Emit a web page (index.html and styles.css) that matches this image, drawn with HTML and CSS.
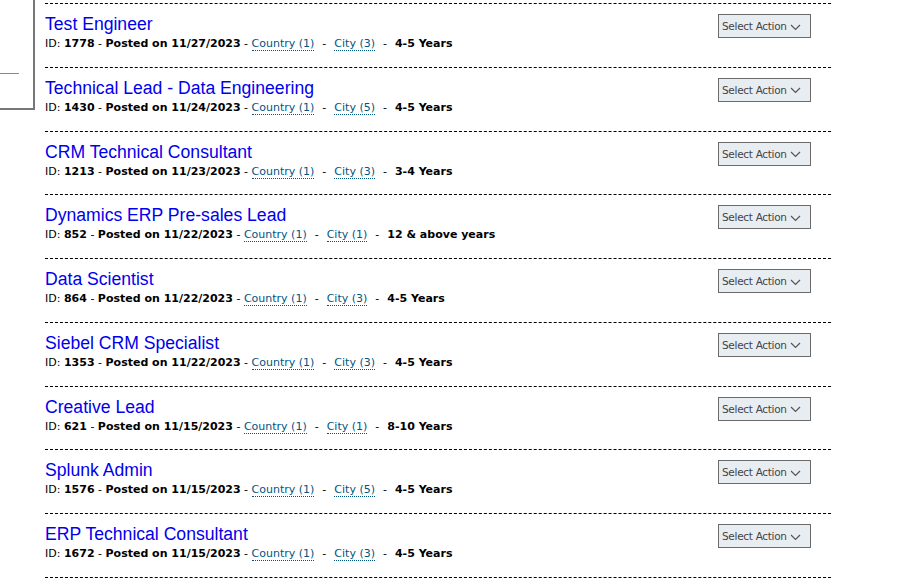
FILE: index.html
```html
<!DOCTYPE html>
<html>
<head>
<meta charset="utf-8">
<link rel="stylesheet" href="styles.css">
</head>
<body>
<div class="side-panel"><div class="side-rule"></div></div>
<div class="jobs">
  <div class="job">
    <div class="job-info">
      <a class="job-title" href="#">Test Engineer</a>
      <div class="job-meta">ID: <b>1778</b> - <b>Posted on 11/27/2023</b> - <a class="loc" href="#">Country (1)</a><span class="sep">-</span><a class="loc" href="#">City (3)</a><span class="sep">-</span><b>4-5 Years</b></div>
    </div>
    <button class="action">Select Action <svg class="chev" width="11" height="7" viewBox="0 0 11 7"><path d="M1 1 L5.5 5.5 L10 1" fill="none" stroke="#555" stroke-width="1.2"/></svg></button>
  </div>
  <div class="job">
    <div class="job-info">
      <a class="job-title" href="#">Technical Lead - Data Engineering</a>
      <div class="job-meta">ID: <b>1430</b> - <b>Posted on 11/24/2023</b> - <a class="loc" href="#">Country (1)</a><span class="sep">-</span><a class="loc" href="#">City (5)</a><span class="sep">-</span><b>4-5 Years</b></div>
    </div>
    <button class="action">Select Action <svg class="chev" width="11" height="7" viewBox="0 0 11 7"><path d="M1 1 L5.5 5.5 L10 1" fill="none" stroke="#555" stroke-width="1.2"/></svg></button>
  </div>
  <div class="job">
    <div class="job-info">
      <a class="job-title" href="#">CRM Technical Consultant</a>
      <div class="job-meta">ID: <b>1213</b> - <b>Posted on 11/23/2023</b> - <a class="loc" href="#">Country (1)</a><span class="sep">-</span><a class="loc" href="#">City (3)</a><span class="sep">-</span><b>3-4 Years</b></div>
    </div>
    <button class="action">Select Action <svg class="chev" width="11" height="7" viewBox="0 0 11 7"><path d="M1 1 L5.5 5.5 L10 1" fill="none" stroke="#555" stroke-width="1.2"/></svg></button>
  </div>
  <div class="job">
    <div class="job-info">
      <a class="job-title" href="#">Dynamics ERP Pre-sales Lead</a>
      <div class="job-meta">ID: <b>852</b> - <b>Posted on 11/22/2023</b> - <a class="loc" href="#">Country (1)</a><span class="sep">-</span><a class="loc" href="#">City (1)</a><span class="sep">-</span><b>12 &amp; above years</b></div>
    </div>
    <button class="action">Select Action <svg class="chev" width="11" height="7" viewBox="0 0 11 7"><path d="M1 1 L5.5 5.5 L10 1" fill="none" stroke="#555" stroke-width="1.2"/></svg></button>
  </div>
  <div class="job">
    <div class="job-info">
      <a class="job-title" href="#">Data Scientist</a>
      <div class="job-meta">ID: <b>864</b> - <b>Posted on 11/22/2023</b> - <a class="loc" href="#">Country (1)</a><span class="sep">-</span><a class="loc" href="#">City (3)</a><span class="sep">-</span><b>4-5 Years</b></div>
    </div>
    <button class="action">Select Action <svg class="chev" width="11" height="7" viewBox="0 0 11 7"><path d="M1 1 L5.5 5.5 L10 1" fill="none" stroke="#555" stroke-width="1.2"/></svg></button>
  </div>
  <div class="job">
    <div class="job-info">
      <a class="job-title" href="#">Siebel CRM Specialist</a>
      <div class="job-meta">ID: <b>1353</b> - <b>Posted on 11/22/2023</b> - <a class="loc" href="#">Country (1)</a><span class="sep">-</span><a class="loc" href="#">City (3)</a><span class="sep">-</span><b>4-5 Years</b></div>
    </div>
    <button class="action">Select Action <svg class="chev" width="11" height="7" viewBox="0 0 11 7"><path d="M1 1 L5.5 5.5 L10 1" fill="none" stroke="#555" stroke-width="1.2"/></svg></button>
  </div>
  <div class="job">
    <div class="job-info">
      <a class="job-title" href="#">Creative Lead</a>
      <div class="job-meta">ID: <b>621</b> - <b>Posted on 11/15/2023</b> - <a class="loc" href="#">Country (1)</a><span class="sep">-</span><a class="loc" href="#">City (1)</a><span class="sep">-</span><b>8-10 Years</b></div>
    </div>
    <button class="action">Select Action <svg class="chev" width="11" height="7" viewBox="0 0 11 7"><path d="M1 1 L5.5 5.5 L10 1" fill="none" stroke="#555" stroke-width="1.2"/></svg></button>
  </div>
  <div class="job">
    <div class="job-info">
      <a class="job-title" href="#">Splunk Admin</a>
      <div class="job-meta">ID: <b>1576</b> - <b>Posted on 11/15/2023</b> - <a class="loc" href="#">Country (1)</a><span class="sep">-</span><a class="loc" href="#">City (5)</a><span class="sep">-</span><b>4-5 Years</b></div>
    </div>
    <button class="action">Select Action <svg class="chev" width="11" height="7" viewBox="0 0 11 7"><path d="M1 1 L5.5 5.5 L10 1" fill="none" stroke="#555" stroke-width="1.2"/></svg></button>
  </div>
  <div class="job">
    <div class="job-info">
      <a class="job-title" href="#">ERP Technical Consultant</a>
      <div class="job-meta">ID: <b>1672</b> - <b>Posted on 11/15/2023</b> - <a class="loc" href="#">Country (1)</a><span class="sep">-</span><a class="loc" href="#">City (3)</a><span class="sep">-</span><b>4-5 Years</b></div>
    </div>
    <button class="action">Select Action <svg class="chev" width="11" height="7" viewBox="0 0 11 7"><path d="M1 1 L5.5 5.5 L10 1" fill="none" stroke="#555" stroke-width="1.2"/></svg></button>
  </div>
</div>
</body>
</html>
```

FILE: styles.css
```css
html, body {
  margin: 0;
  padding: 0;
  background: #fff;
  overflow: hidden;
}
body {
  position: relative;
  width: 923px;
  height: 580px;
  font-family: "DejaVu Sans", Verdana, sans-serif;
}
.side-panel {
  position: absolute;
  left: -10px;
  top: -10px;
  width: 43px;
  height: 118px;
  border-right: 2px solid #777;
  border-bottom: 2px solid #777;
}
.side-rule {
  position: absolute;
  left: 0;
  top: 83px;
  width: 29px;
  height: 1px;
  background: #888;
}
.jobs {
  margin-left: 45px;
  padding-top: 3px;
  width: 786px;
}
.job {
  display: flex;
  justify-content: space-between;
  align-items: flex-start;
  height: 62.78px;
  padding: 0 20px 0 0;
  border-top: 1px dashed #000;
}
.job:last-child {
  border-bottom: 1px dashed #000;
}
.job-info {
  display: flex;
  flex-direction: column;
  padding-top: 9px;
}
.job-title {
  font-family: "Liberation Sans", Arial, sans-serif;
  font-size: 17.6px;
  line-height: 23px;
  color: #0000ee;
  text-decoration: none;
}
.job-meta {
  font-size: 11px;
  line-height: 16px;
  color: #000;
  white-space: nowrap;
}
.job-meta b {
  font-weight: bold;
}
.sep {
  margin: 0 8px;
}
.loc {
  color: #00557f;
  text-decoration: none;
  border-bottom: 1px dotted #00557f;
}
.action {
  margin-top: 10px;
  width: 93px;
  height: 24px;
  padding: 0 3px;
  display: flex;
  align-items: center;
  gap: 3px;
  background: #e8edf2;
  border: 1px solid #6a6a6a;
  border-radius: 0;
  font-family: "DejaVu Sans", Verdana, sans-serif;
  font-size: 10.5px;
  color: #444;
  letter-spacing: -0.3px;
  white-space: nowrap;
}
.chev {
  margin-top: 2px;
}
```
